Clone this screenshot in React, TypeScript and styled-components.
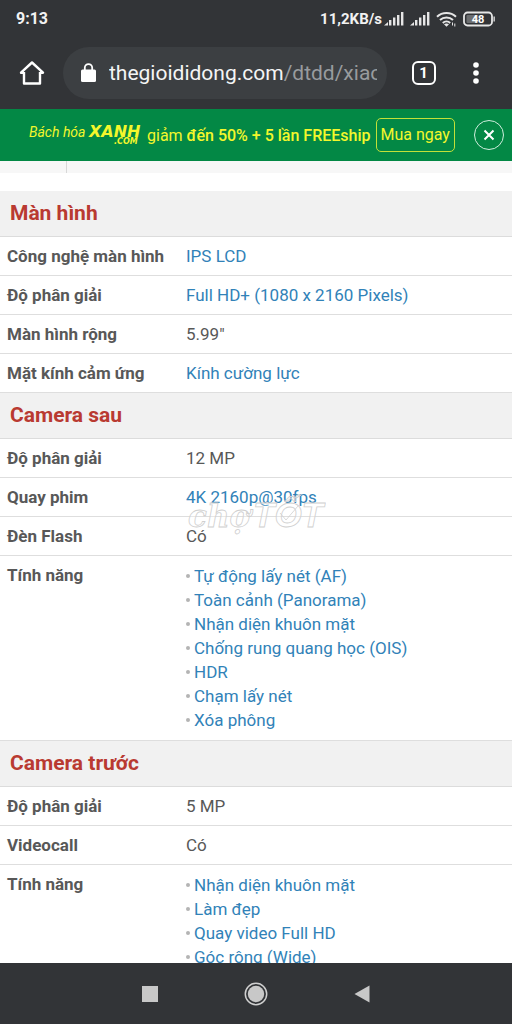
import React from 'react';
import styled, { createGlobalStyle } from 'styled-components';

const GlobalStyle = createGlobalStyle`
  * { box-sizing: border-box; }
  body { margin: 0; background: #fff; font-family: Roboto, "Liberation Sans", sans-serif; }
  button, input { font: inherit; }
`;

const Screen = styled.div`
  display: flex;
  flex-direction: column;
  height: 100vh;
  overflow: hidden;
  position: relative;
`;

const StatusBar = styled.header`
  flex: none;
  display: flex;
  align-items: center;
  justify-content: space-between;
  height: 37px;
  padding: 0 16px;
  background: #323437;
  color: #f2f2f2;
  font-size: 16px;
  font-weight: 700;
`;

const StatusIcons = styled.div`
  display: flex;
  align-items: center;
  gap: 6px;
`;

const Speed = styled.span`
  margin-right: -4px;
  font-size: 15px;
`;

const BrowserBar = styled.div`
  flex: none;
  display: flex;
  align-items: center;
  height: 72px;
  padding-right: 20px;
  background: #323437;
`;

const IconButton = styled.button<{ $width: number }>`
  flex: none;
  display: flex;
  align-items: center;
  justify-content: center;
  width: ${(p) => p.$width}px;
  height: 48px;
  padding: 0;
  border: 0;
  background: none;
  color: #fff;
`;

const TabCount = styled.span`
  display: flex;
  align-items: center;
  justify-content: center;
  width: 24px;
  height: 24px;
  border: 2px solid #fff;
  border-radius: 6px;
  font-size: 15px;
  font-weight: 700;
`;

const AddressBar = styled.div`
  flex: 1;
  min-width: 0;
  display: flex;
  align-items: center;
  gap: 13px;
  height: 52px;
  padding: 0 10px 0 18px;
  border-radius: 26px;
  background: #3c3f42;
`;

const Address = styled.div`
  flex: 1;
  overflow: hidden;
  white-space: nowrap;
  color: #f4f5f5;
  font-size: 21px;
  line-height: 28px;
`;

const Path = styled.span`
  color: #989b9e;
`;

const Promo = styled.aside`
  flex: none;
  display: flex;
  align-items: center;
  height: 52px;
  padding: 0 8px 0 29px;
  background: #038845;
  color: #f4f72c;
  font-size: 16px;
  white-space: nowrap;
`;

const PromoText = styled.span`
  margin: 0 5px;

  b {
    font-weight: 500;
  }
`;

const BuyLink = styled.a`
  padding: 0 4px;
  border: 1px solid #c3e038;
  border-radius: 5px;
  color: inherit;
  line-height: 32px;
  text-decoration: none;
`;

const CloseButton = styled.button`
  display: flex;
  align-items: center;
  justify-content: center;
  width: 30px;
  height: 30px;
  margin-left: auto;
  padding: 0;
  border: 1px solid #cfeedd;
  border-radius: 50%;
  background: none;
`;

const Content = styled.main`
  flex: 1;
  min-height: 0;
  overflow: hidden;
  background: #fff;
`;

const Strip = styled.div`
  height: 12px;
  margin-bottom: 18px;
  background: #f7f7f7;
`;

const StripCell = styled.div`
  width: 67px;
  height: 100%;
  border-right: 1px solid #d8d8d8;
`;

const SpecTable = styled.table`
  width: 100%;
  border-collapse: separate;
  border-spacing: 0;
  table-layout: fixed;
  color: #585858;
  font-size: 17px;
  line-height: 24px;
  text-align: left;
`;

const LabelCol = styled.col`
  width: 186px;
`;

const SectionHead = styled.th`
  padding: 8px 10px 9px;
  border-bottom: 1px solid #dcdcdc;
  background: #f1f1f1;
  color: #b93a31;
  font-size: 21px;
  line-height: 28px;
`;

const Label = styled.th`
  padding: 7px 0 7px 7px;
  border-bottom: 1px solid #dedede;
  vertical-align: top;
  white-space: nowrap;
`;

const Value = styled.td`
  padding: 7px 0;
  border-bottom: 1px solid #dedede;
  vertical-align: top;
`;

const SpecLink = styled.a`
  color: #3182b8;
  text-decoration: none;
`;

const Features = styled.ul`
  margin: 0;
  padding: 1px 0;
  list-style: none;
`;

const Feature = styled.li`
  display: flex;
  align-items: center;
  gap: 4px;

  &::before {
    content: '';
    width: 4px;
    height: 4px;
    border-radius: 50%;
    background: #b4b4b4;
  }
`;

const Watermark = styled.svg`
  position: absolute;
  top: 50%;
  left: 50%;
  transform: translate(-50%, -50%);
  pointer-events: none;
`;

const NavBar = styled.nav`
  flex: none;
  display: flex;
  align-items: center;
  justify-content: center;
  height: 61px;
  background: #323437;
`;

type Spec = { label: string; text?: string; link?: string; list?: string[] };

const sections: { title: string; specs: Spec[] }[] = [
  {
    title: 'Màn hình',
    specs: [
      { label: 'Công nghệ màn hình', link: 'IPS LCD' },
      { label: 'Độ phân giải', link: 'Full HD+ (1080 x 2160 Pixels)' },
      { label: 'Màn hình rộng', text: '5.99"' },
      { label: 'Mặt kính cảm ứng', link: 'Kính cường lực' },
    ],
  },
  {
    title: 'Camera sau',
    specs: [
      { label: 'Độ phân giải', text: '12 MP' },
      { label: 'Quay phim', link: '4K 2160p@30fps' },
      { label: 'Đèn Flash', text: 'Có' },
      {
        label: 'Tính năng',
        list: [
          'Tự động lấy nét (AF)',
          'Toàn cảnh (Panorama)',
          'Nhận diện khuôn mặt',
          'Chống rung quang học (OIS)',
          'HDR',
          'Chạm lấy nét',
          'Xóa phông',
        ],
      },
    ],
  },
  {
    title: 'Camera trước',
    specs: [
      { label: 'Độ phân giải', text: '5 MP' },
      { label: 'Videocall', text: 'Có' },
      {
        label: 'Tính năng',
        list: ['Nhận diện khuôn mặt', 'Làm đẹp', 'Quay video Full HD', 'Góc rộng (Wide)'],
      },
    ],
  },
];

const Signal = () => (
  <svg width="20" height="15" viewBox="0 0 20 15" fill="#e6e6e6" aria-hidden="true">
    <path d="M0 14.5 4 11v3.5z" />
    <rect x="5" y="9" width="2.4" height="5.5" />
    <rect x="9" y="6.5" width="2.4" height="8" />
    <rect x="13" y="4" width="2.4" height="10.5" />
    <rect x="17" y="1" width="2.4" height="13.5" />
  </svg>
);

const Wifi = () => (
  <svg width="21" height="16" viewBox="0 0 21 16" fill="none" stroke="#e6e6e6" strokeWidth="2" aria-hidden="true">
    <path d="M1 5.8C6.300 .8 14.700 .8 20 5.800" />
    <path d="M4 9c3.600-3.400 9.400-3.400 13 0" />
    <path d="M6.800 12c2.100-2 5.300-2 7.400 0" />
    <path d="M8 13.300 10.500 15.800l2.500-2.500c-1.400-1.100-3.600-1.100-5 0z" fill="#e6e6e6" stroke="none" />
    <path d="M16.500 14.500v-3M18.800 12.500V15.500" strokeWidth="1" />
  </svg>
);

const Battery = () => (
  <svg width="33" height="16" viewBox="0 0 33 16" aria-label="48%">
    <rect x="1" y="1.500" width="28" height="13" rx="3.500" fill="none" stroke="#e6e6e6" strokeWidth="1.800" />
    <rect x="3.500" y="4" width="12" height="8" rx="1" fill="#6c6e70" />
    <path d="M30.500 5.500h1.300v5h-1.300z" fill="#e6e6e6" />
    <text x="15" y="12" textAnchor="middle" fill="#fff" fontSize="11" fontWeight="700">48</text>
  </svg>
);

const PromoLogo = () => (
  <svg width="113" height="26" viewBox="0 0 113 26" fill="#f4f72c" fontStyle="italic" aria-label="Bách hóa XANH.com">
    <text x="0" y="15" fontFamily="Roboto, sans-serif" fontSize="14">Bách hóa</text>
    <g fontFamily="DejaVu Sans, sans-serif" fontWeight="700">
      <text x="60" y="15" fontSize="16">XANH</text>
      <text x="85" y="22" fontSize="8">.COM</text>
    </g>
  </svg>
);

export default function App() {
  return (
    <Screen>
      <GlobalStyle />
      <StatusBar>
        <span>9:13</span>
        <StatusIcons>
          <Speed>11,2KB/s</Speed>
          <Signal />
          <Signal />
          <Wifi />
          <Battery />
        </StatusIcons>
      </StatusBar>

      <BrowserBar>
        <IconButton $width={63} aria-label="Home">
          <svg width="26" height="26" viewBox="0 0 26 26" fill="none" stroke="#fff" strokeWidth="2.400" strokeLinejoin="round">
            <path d="M5 12.700H2L13 2.500l11 10.200h-3M5 12v11.500h16V12" />
          </svg>
        </IconButton>
        <AddressBar>
          <svg width="15" height="20" viewBox="0 0 15 20" aria-hidden="true">
            <rect x="0" y="6.500" width="15" height="12.500" rx="1.500" fill="#fff" />
            <path d="M3.800 8V4.800a3.700 3.700 0 0 1 7.400 0V8" fill="none" stroke="#fff" strokeWidth="1.800" />
          </svg>
          <Address>
            thegioididong.com<Path>/dtdd/xiaomi</Path>
          </Address>
        </AddressBar>
        <IconButton $width={73} aria-label="Tabs">
          <TabCount>1</TabCount>
        </IconButton>
        <IconButton $width={32} aria-label="Menu">
          <svg width="6" height="22" viewBox="0 0 6 22" fill="#fff">
            <circle cx="3" cy="3" r="2.800" />
            <circle cx="3" cy="11" r="2.800" />
            <circle cx="3" cy="19" r="2.800" />
          </svg>
        </IconButton>
      </BrowserBar>

      <Promo>
        <PromoLogo />
        <PromoText>
          giảm <b>đến 50% + 5 lần FREEship</b>
        </PromoText>
        <BuyLink href="#">Mua ngay</BuyLink>
        <CloseButton aria-label="Close">
          <svg width="12" height="12" viewBox="0 0 12 12" stroke="#fff" strokeWidth="2">
            <path d="M1.500 1.500l9 9M10.500 1.500l-9 9" />
          </svg>
        </CloseButton>
      </Promo>

      <Content>
        <Strip>
          <StripCell />
        </Strip>
        <SpecTable>
          <colgroup>
            <LabelCol />
            <col />
          </colgroup>
          {sections.map((section) => (
            <tbody key={section.title}>
              <tr>
                <SectionHead colSpan={2}>{section.title}</SectionHead>
              </tr>
              {section.specs.map((spec) => (
                <tr key={spec.label}>
                  <Label scope="row">{spec.label}</Label>
                  <Value>
                    {spec.text}
                    {spec.link && <SpecLink href="#">{spec.link}</SpecLink>}
                    {spec.list && (
                      <Features>
                        {spec.list.map((item) => (
                          <Feature key={item}>
                            <SpecLink href="#">{item}</SpecLink>
                          </Feature>
                        ))}
                      </Features>
                    )}
                  </Value>
                </tr>
              ))}
            </tbody>
          ))}
        </SpecTable>
      </Content>

      <Watermark width="140" height="54" viewBox="0 0 140 54" fill="#fff" fillOpacity="0.3" stroke="#cfcfcf" strokeWidth="0.800" aria-label="chợTỐT">
        <text x="2" y="42" fontFamily="DejaVu Serif, serif" fontWeight="700" fontStyle="italic" fontSize="31">chợ</text>
        <text x="67" y="42" fontFamily="Liberation Sans, sans-serif" fontWeight="700" fontStyle="italic" fontSize="35">TỐT</text>
        <path d="M94 28l6 7 12-14" fill="none" />
      </Watermark>

      <NavBar>
        <IconButton $width={106} aria-label="Recent apps">
          <svg width="16" height="16" viewBox="0 0 16 16">
            <rect width="16" height="16" fill="#c8c8c8" />
          </svg>
        </IconButton>
        <IconButton $width={106} aria-label="Home screen">
          <svg width="24" height="24" viewBox="0 0 24 24">
            <circle cx="12" cy="12" r="10.700" fill="none" stroke="#d0d0d0" strokeWidth="1.500" />
            <circle cx="12" cy="12" r="8.200" fill="#c8c8c8" />
          </svg>
        </IconButton>
        <IconButton $width={106} aria-label="Back">
          <svg width="16" height="18" viewBox="0 0 16 18">
            <path d="M.5 9 15.500.5v17z" fill="#c8c8c8" />
          </svg>
        </IconButton>
      </NavBar>
    </Screen>
  );
}
